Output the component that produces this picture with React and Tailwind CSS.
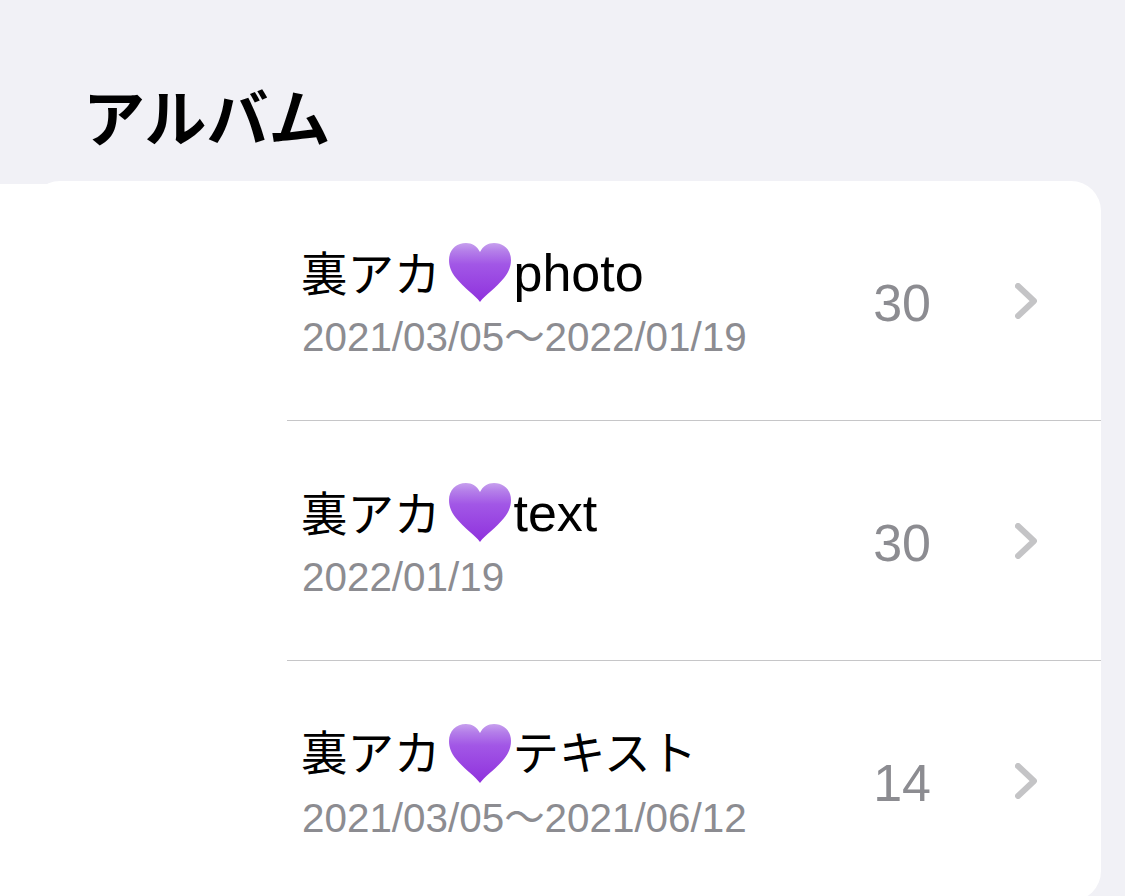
import React from "react";

const albums = [
  { name: "photo", date: "2021/03/05～2022/01/19", count: 30, nameClass: "text-[52px] ml-[3px]" },
  { name: "text", date: "2022/01/19", count: 30, nameClass: "text-[52px] ml-[3px]" },
  { name: "テキスト", date: "2021/03/05～2021/06/12", count: 14, nameClass: "text-[46.5px] ml-[2px]" },
];

function PurpleHeart({ id }) {
  return (
    <svg viewBox="0 0 62 60" className="w-[62px] h-[60px] shrink-0 ml-[8px]">
      <defs>
        <linearGradient id={id} x1="0" y1="0" x2="0" y2="1">
          <stop offset="0" stopColor="#c7a0ee" />
          <stop offset="0.14" stopColor="#b47ee9" />
          <stop offset="0.36" stopColor="#a257e6" />
          <stop offset="1" stopColor="#8f31dd" />
        </linearGradient>
      </defs>
      <path
        d="M31 59 C26 52 15 45 7 35 C2 29 0 23 0 17 C0 7 7 0 17 0 C23 0 28 3 31 9 C34 3 39 0 45 0 C55 0 62 7 62 17 C62 23 60 29 55 35 C47 45 36 52 31 59 Z"
        fill={`url(#${id})`}
      />
    </svg>
  );
}

function AlbumRow({ album, index, last }) {
  return (
    <div className={`ml-[257px] h-[240px] pl-[15px] flex items-center ${last ? "" : "border-b border-[#c6c6c8]"}`}>
      <div className="flex-1 min-w-0 pt-[9px]">
        <div className="flex items-baseline h-[60px] leading-[60px] text-black -mt-[8px]">
          <span className="text-[46.5px] -ml-[1px]">裏アカ</span>
          <span className="self-start"><PurpleHeart id={`heart-${index}`} /></span>
          <span className={album.nameClass}>{album.name}</span>
        </div>
        <div className="text-[40.4px] leading-[44px] text-[#8c8c91] mt-[12px]">{album.date}</div>
      </div>
      <div className="text-[52px] leading-none text-[#8c8c91] text-right mt-[4px]">{album.count}</div>
      <svg viewBox="0 0 22 36" className="w-[22px] h-[36px] ml-[84px] mr-[64px]">
        <path d="M3 3 L19 18 L3 33" fill="none" stroke="#c4c4c6" strokeWidth="6" strokeLinecap="round" strokeLinejoin="round" />
      </svg>
    </div>
  );
}

export default function App() {
  return (
    <div className="relative h-[896px] w-[1125px] overflow-hidden bg-[#f1f1f6] font-['Liberation_Sans','Noto_Sans_CJK_JP',sans-serif]">
      <h1 className="pl-[83px] pt-[82px] h-[181px] text-[62px] leading-[78px] font-bold text-black">アルバム</h1>
      <div className="absolute left-0 top-[184px] bottom-0 w-[50px] bg-white"></div>
      <div className="ml-[30px] w-[1071px] h-[720px] bg-white rounded-[30px]">
        {albums.map((album, index) => (
          <AlbumRow key={index} album={album} index={index} last={index === albums.length - 1} />
        ))}
      </div>
    </div>
  );
}
